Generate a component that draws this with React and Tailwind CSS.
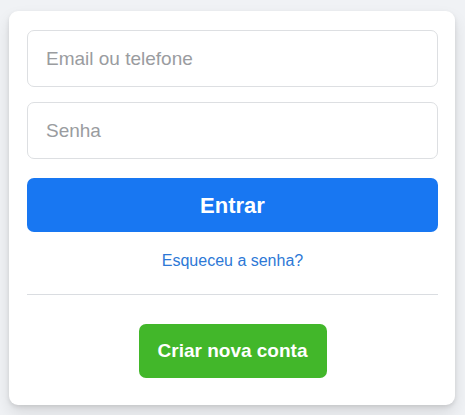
export default function App() {
  return (
    <div className="min-h-screen w-full bg-[#f0f2f5] pl-[9px] pr-[10px] pt-[11px] pb-[10px] font-['Liberation_Sans',Arial,sans-serif]">
      <div className="w-[446px] rounded-[9px] bg-white pl-[18px] pr-[17px] pt-[19px] pb-[27px] shadow-[0_2px_4px_rgba(0,0,0,0.1),0_8px_16px_rgba(0,0,0,0.1)] flex flex-col">
        <input
          type="text"
          placeholder="Email ou telefone"
          className="h-[57px] w-full rounded-[7px] border border-[#dddfe2] px-[18px] text-[19px] text-[#1c1e21] placeholder:text-[#9a9ca0] outline-none"
        />
        <input
          type="password"
          placeholder="Senha"
          className="mt-[15px] h-[57px] w-full rounded-[7px] border border-[#dddfe2] px-[18px] text-[19px] text-[#1c1e21] placeholder:text-[#9a9ca0] outline-none"
        />
        <button className="mt-[19px] h-[54px] w-full rounded-[7px] bg-[#1877f2] text-[22px] font-bold text-white">
          Entrar
        </button>
        <a className="mt-[19px] text-center text-[16px] leading-[19px] text-[#2d78d6]">
          Esqueceu a senha?
        </a>
        <div className="mt-[24px] h-px w-full bg-[#dadde1]" />
        <div className="mt-[29px] flex justify-center">
          <button className="h-[54px] w-[188px] rounded-[7px] bg-[#42b72a] text-[19px] font-bold text-white">
            Criar nova conta
          </button>
        </div>
      </div>
    </div>
  );
}
